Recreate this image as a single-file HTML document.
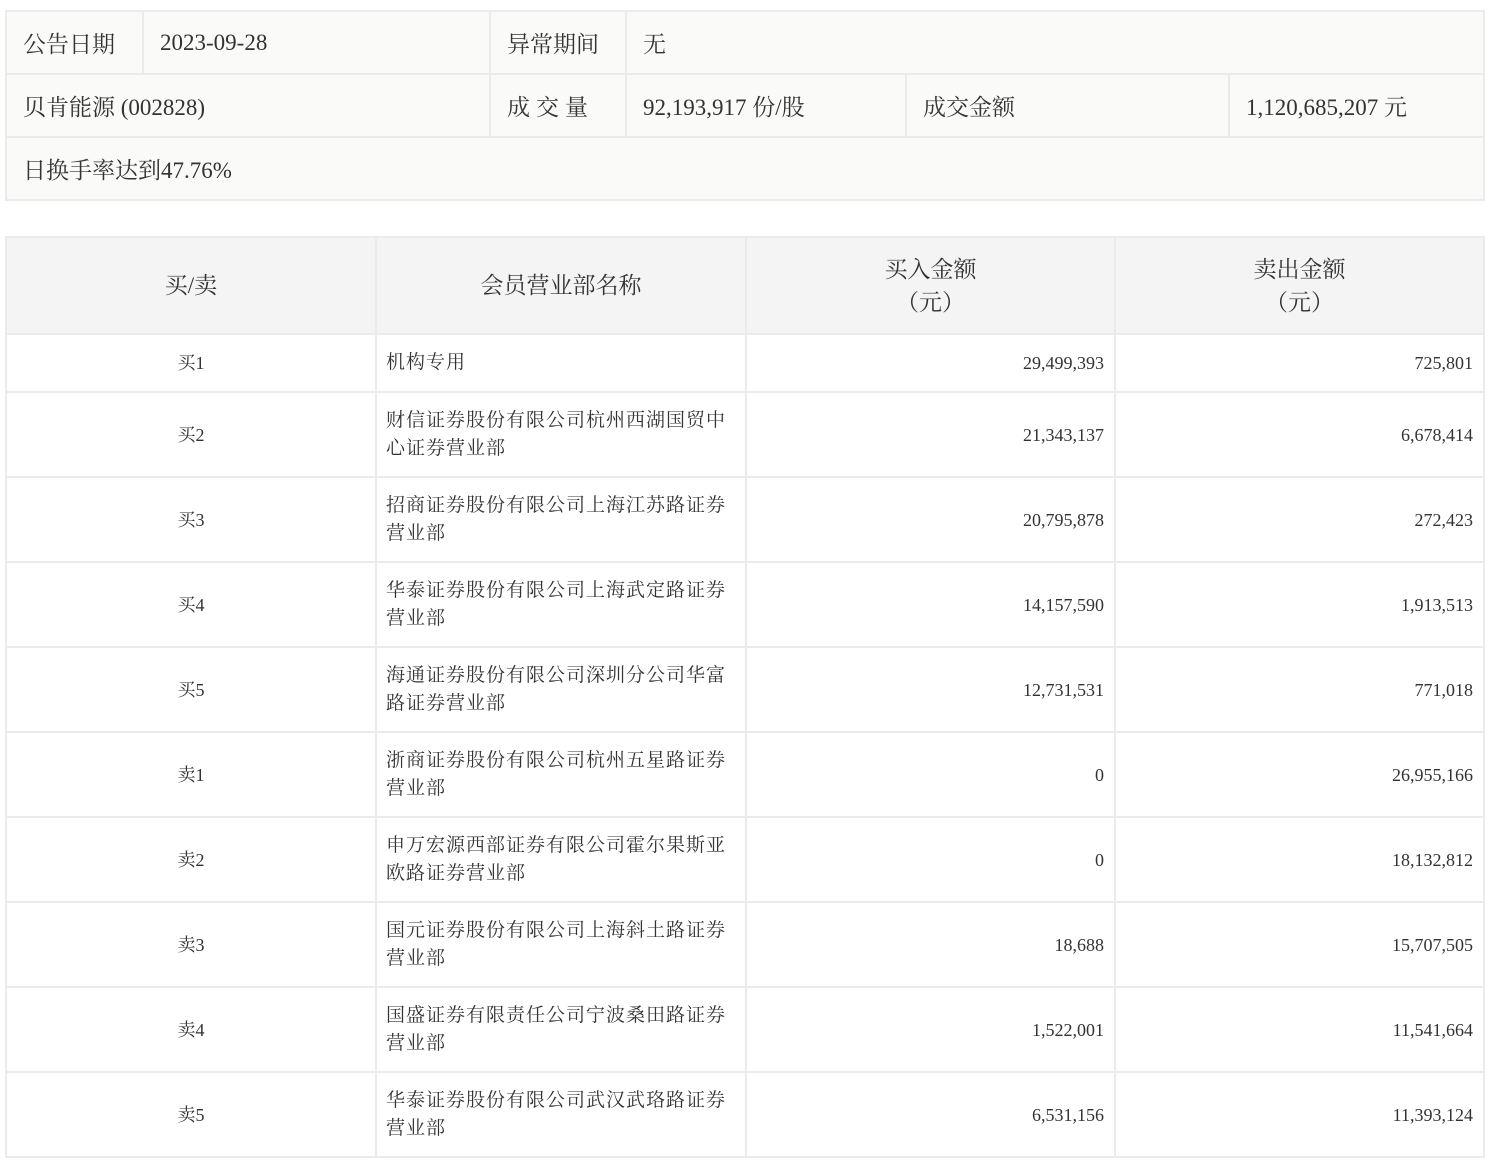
<!DOCTYPE html>
<html><head><meta charset="utf-8"><style>
body{margin:0;background:#fff;font-family:"Liberation Serif","Noto Serif CJK SC",serif;color:#333;}
table{border-collapse:collapse;table-layout:fixed;position:absolute;left:5px;}
td,th{border:2px solid #ebebeb;padding:0;}
#t1{top:10px;width:1478px;background:#fafaf8;font-size:23px;}
#t1 td{height:61px;padding-left:16px;}
#t2{top:236px;width:1478px;font-size:18px;}
#t2 th{background:#f4f4f4;font-weight:normal;font-size:23px;height:95px;line-height:33px;}
#t2 td{height:83px;line-height:28px;}
#t2 tr.f td{height:56px;}
#t2 td.c{text-align:center;}
#t2 td.n{padding-left:9px;font-size:19px;letter-spacing:1px;}
#t2 td.r{text-align:right;padding-right:10px;}
</style></head><body>
<table id="t1">
<colgroup><col style="width:137px"><col style="width:347px"><col style="width:136px"><col style="width:280px"><col style="width:323px"><col style="width:255px"></colgroup>
<tr><td>公告日期</td><td>2023-09-28</td><td>异常期间</td><td colspan="3">无</td></tr>
<tr><td colspan="2">贝肯能源 (002828)</td><td style="letter-spacing:6px">成交量</td><td>92,193,917 份/股</td><td>成交金额</td><td>1,120,685,207 元</td></tr>
<tr><td colspan="6">日换手率达到47.76%</td></tr>
</table>
<table id="t2">
<colgroup><col style="width:370px"><col style="width:370px"><col style="width:369px"><col style="width:369px"></colgroup>
<tr><th>买/卖</th><th>会员营业部名称</th><th>买入金额<br>（元）</th><th>卖出金额<br>（元）</th></tr>
<tr class="f"><td class="c">买1</td><td class="n">机构专用</td><td class="r">29,499,393</td><td class="r">725,801</td></tr>
<tr><td class="c">买2</td><td class="n">财信证券股份有限公司杭州西湖国贸中心证券营业部</td><td class="r">21,343,137</td><td class="r">6,678,414</td></tr>
<tr><td class="c">买3</td><td class="n">招商证券股份有限公司上海江苏路证券营业部</td><td class="r">20,795,878</td><td class="r">272,423</td></tr>
<tr><td class="c">买4</td><td class="n">华泰证券股份有限公司上海武定路证券营业部</td><td class="r">14,157,590</td><td class="r">1,913,513</td></tr>
<tr><td class="c">买5</td><td class="n">海通证券股份有限公司深圳分公司华富路证券营业部</td><td class="r">12,731,531</td><td class="r">771,018</td></tr>
<tr><td class="c">卖1</td><td class="n">浙商证券股份有限公司杭州五星路证券营业部</td><td class="r">0</td><td class="r">26,955,166</td></tr>
<tr><td class="c">卖2</td><td class="n">申万宏源西部证券有限公司霍尔果斯亚欧路证券营业部</td><td class="r">0</td><td class="r">18,132,812</td></tr>
<tr><td class="c">卖3</td><td class="n">国元证券股份有限公司上海斜土路证券营业部</td><td class="r">18,688</td><td class="r">15,707,505</td></tr>
<tr><td class="c">卖4</td><td class="n">国盛证券有限责任公司宁波桑田路证券营业部</td><td class="r">1,522,001</td><td class="r">11,541,664</td></tr>
<tr><td class="c">卖5</td><td class="n">华泰证券股份有限公司武汉武珞路证券营业部</td><td class="r">6,531,156</td><td class="r">11,393,124</td></tr>
</table>
</body></html>
